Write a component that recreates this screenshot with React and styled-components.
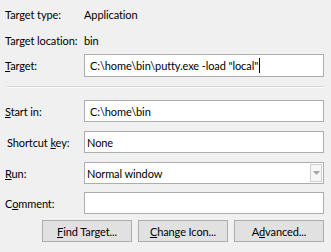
import React from 'react';
import styled, { createGlobalStyle } from 'styled-components';

const GlobalStyle = createGlobalStyle`
    html, body {
        margin: 0;
        padding: 0;
        background: #f0f0f0;
    }
    body {
        font-family: Lato, "Liberation Sans", sans-serif;
        font-size: 11px;
        letter-spacing: -0.1px;
        color: #000;
    }
`;

const App = () => {
    return (
        <Page>
            <GlobalStyle />
            <InfoRow>
                <Label>Target type:</Label>
                <Value>Application</Value>
            </InfoRow>
            <InfoRow>
                <Label>Target location:</Label>
                <Value>bin</Value>
            </InfoRow>
            <FieldRow $top={1}>
                <Label>
                    <u>T</u>arget:
                </Label>
                <Input $tall $inset={5}>
                    C:\home\bin\putty.exe -load "local"
                    <Caret />
                </Input>
            </FieldRow>

            <Separator />

            <FieldRow $top={12}>
                <Label>
                    <u>S</u>tart in:
                </Label>
                <Input $inset={5}>C:\home\bin</Input>
            </FieldRow>
            <FieldRow $top={9}>
                <Label $shift={2}>
                    Shortcut <u>k</u>ey:
                </Label>
                <Input $inset={2}>None</Input>
            </FieldRow>
            <FieldRow $top={9}>
                <Label>
                    <u>R</u>un:
                </Label>
                <Input $inset={2}>
                    Normal window
                    <DropButton>
                        <svg width="7" height="4" viewBox="0 0 7 4">
                            <path d="M0 0 H7 L3.5 4 Z" fill="#a6a6a6" />
                        </svg>
                    </DropButton>
                </Input>
            </FieldRow>
            <FieldRow $top={8}>
                <Label>
                    C<u>o</u>mment:
                </Label>
                <Input $inset={2} />
            </FieldRow>

            <ButtonBar>
                <Button>
                    <u>F</u>ind Target...
                </Button>
                <Button>
                    <u>C</u>hange Icon...
                </Button>
                <Button>
                    A<u>d</u>vanced...
                </Button>
            </ButtonBar>
        </Page>
    );
};

export default App;

const Page = styled.div`
    width: 331px;
    height: 252px;
    box-sizing: border-box;
    padding: 1px 7px 0 5px;
    overflow: hidden;
    display: flex;
    flex-direction: column;
`;

const InfoRow = styled.div`
    display: grid;
    grid-template-columns: 79px 1fr;
    align-items: center;
    height: 26px;
`;

const FieldRow = styled.div`
    display: grid;
    grid-template-columns: 79px 1fr;
    align-items: center;
    margin-top: ${(p) => p.$top || 0}px;
`;

const Label = styled.span`
    white-space: nowrap;
    padding-left: ${(p) => p.$shift || 0}px;

    > u {
        text-underline-offset: 1px;
    }
`;

const Value = styled.span`
    white-space: nowrap;
`;

const Input = styled.div`
    position: relative;
    box-sizing: border-box;
    height: ${(p) => (p.$tall ? 23 : 22)}px;
    display: flex;
    align-items: center;
    padding-left: ${(p) => p.$inset}px;
    background: #fff;
    border: 1px solid #adadad;
    white-space: nowrap;
`;

const Caret = styled.span`
    display: inline-block;
    width: 1px;
    height: 15px;
    margin-left: 1px;
    background: #000;
`;

const DropButton = styled.span`
    position: absolute;
    top: 1px;
    right: 1px;
    bottom: 1px;
    width: 12px;
    box-sizing: border-box;
    border: 1px solid #cfcfcf;
    background: #f7f7f7;
    display: flex;
    align-items: center;
    justify-content: center;
`;

const Separator = styled.div`
    margin: 9px 0 0 2px;
    height: 1px;
    background: #d5d5d5;
    border-bottom: 1px solid #fcfcfc;
`;

const ButtonBar = styled.div`
    display: flex;
    justify-content: flex-end;
    gap: 6px;
    margin-top: 6px;
`;

const Button = styled.button`
    width: 90px;
    height: 22px;
    box-sizing: border-box;
    padding: 0;
    background: #e1e1e1;
    border: 1px solid #adadad;
    font-family: inherit;
    font-size: 11px;
    letter-spacing: -0.1px;
    color: #000;
`;
